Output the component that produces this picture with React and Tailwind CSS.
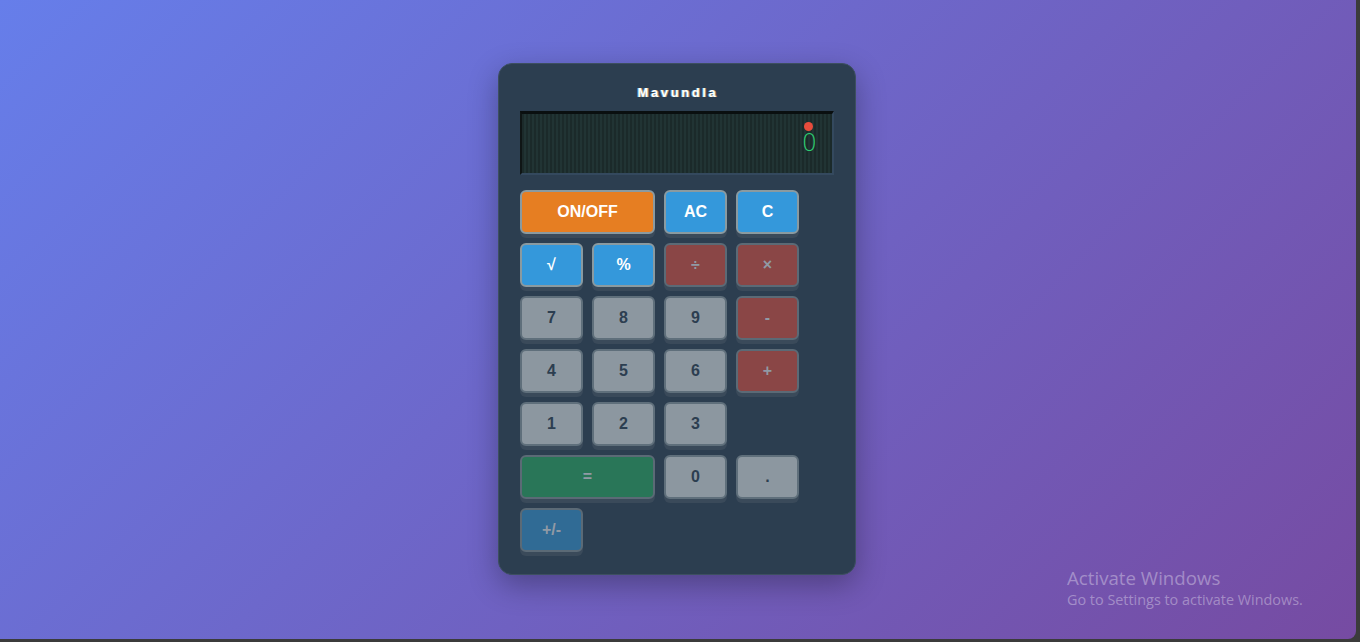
import React from "react";

const base =
  "h-[44px] rounded-[6px] border-2 flex items-center justify-center font-bold text-[16px] shadow-[0_4px_0_#3a4a5a]";

const styles = {
  orange: "bg-[#e67e22] border-[#8a9aa0] text-white",
  blue: "bg-[#3498db] border-[#8a9aa0] text-white",
  red: "bg-[#8a4646] border-[#5b6a76] text-[#909aa5]",
  digit: "bg-[#8c97a0] border-[#5f6f7b] text-[#2c3e50]",
  green: "bg-[#297658] border-[#5b6a76] text-[#909aa5]",
  pm: "bg-[#306b95] border-[#5b6a76] text-[#909aa5]",
};

function Btn({ label, kind, span }) {
  return (
    <div className={`${base} ${styles[kind]} ${span ? "col-span-2" : ""}`}>
      {label}
    </div>
  );
}

export default function App() {
  const rows = [
    [["ON/OFF", "orange", true], ["AC", "blue"], ["C", "blue"]],
    [["√", "blue"], ["%", "blue"], ["÷", "red"], ["×", "red"]],
    [["7", "digit"], ["8", "digit"], ["9", "digit"], ["-", "red"]],
    [["4", "digit"], ["5", "digit"], ["6", "digit"], ["+", "red"]],
    [["1", "digit"], ["2", "digit"], ["3", "digit"]],
    [["=", "green", true], ["0", "digit"], [".", "digit"]],
    [["+/-", "pm"]],
  ];
  return (
    <div
      className="w-[1360px] h-[642px] bg-[#3b3b3b] overflow-hidden"
      style={{ fontFamily: "'Liberation Sans', Arial, sans-serif" }}
    >
      <div className="relative w-[1356px] h-[639px] rounded-br-[8px] bg-[linear-gradient(135deg,#667eea_0%,#764ba2_100%)] flex items-center justify-center">
        <div className="w-[358px] h-[512px] bg-[#2c3e50] rounded-[14px] border border-[#3d4f60] shadow-[0_10px_30px_rgba(0,0,0,0.3)] px-[21px] pt-[19px] mt-[-1px] ml-[-2px]">
          <div className="text-center text-white font-bold text-[13px] tracking-[2.6px] leading-[20px] pl-[2px] [text-shadow:1px_0_0_rgba(255,200,120,0.6),-1px_0_0_rgba(120,200,255,0.6)]">
            Mavundla
          </div>
          <div className="mt-[8px] h-[64px] w-[314px] flex flex-col items-end pr-[15px] pt-[8px] border-t-[3px] border-l-[2px] border-t-[#0a0f10] border-l-[#0f1515] border-r-[2px] border-b-[2px] border-r-[#34495e] border-b-[#34495e] bg-[repeating-linear-gradient(90deg,#1b2a2a_0px,#1b2a2a_2px,#213434_2px,#213434_4px)]">
            <div className="w-[9px] h-[9px] mr-[4px] rounded-full bg-[#e74c3c]" />
            <div
              className="text-[24px] leading-[24px] text-[#2ecc71]"
              style={{ fontFamily: "'DejaVu Sans', sans-serif", fontWeight: 200 }}
            >
              0
            </div>
          </div>
          <div className="mt-[15px] grid grid-cols-[repeat(4,63px)] gap-[9px]">
            {rows.map((r, i) => (
              <React.Fragment key={i}>
                {r.map(([l, k, s], j) => (
                  <Btn key={j} label={l} kind={k} span={s} />
                ))}
                {Array.from({
                  length: 4 - r.reduce((a, x) => a + (x[2] ? 2 : 1), 0),
                }).map((_, j) => (
                  <div key={"e" + j} />
                ))}
              </React.Fragment>
            ))}
          </div>
        </div>
        <div
          className="absolute left-[1067px] top-[566px] text-[rgba(255,255,255,0.35)]"
          style={{ fontFamily: "'Open Sans', 'Noto Sans', sans-serif" }}
        >
          <div className="text-[18.7px] leading-[24px]">Activate Windows</div>
          <div className="text-[14.4px] leading-[20px]">Go to Settings to activate Windows.</div>
        </div>
      </div>
    </div>
  );
}
